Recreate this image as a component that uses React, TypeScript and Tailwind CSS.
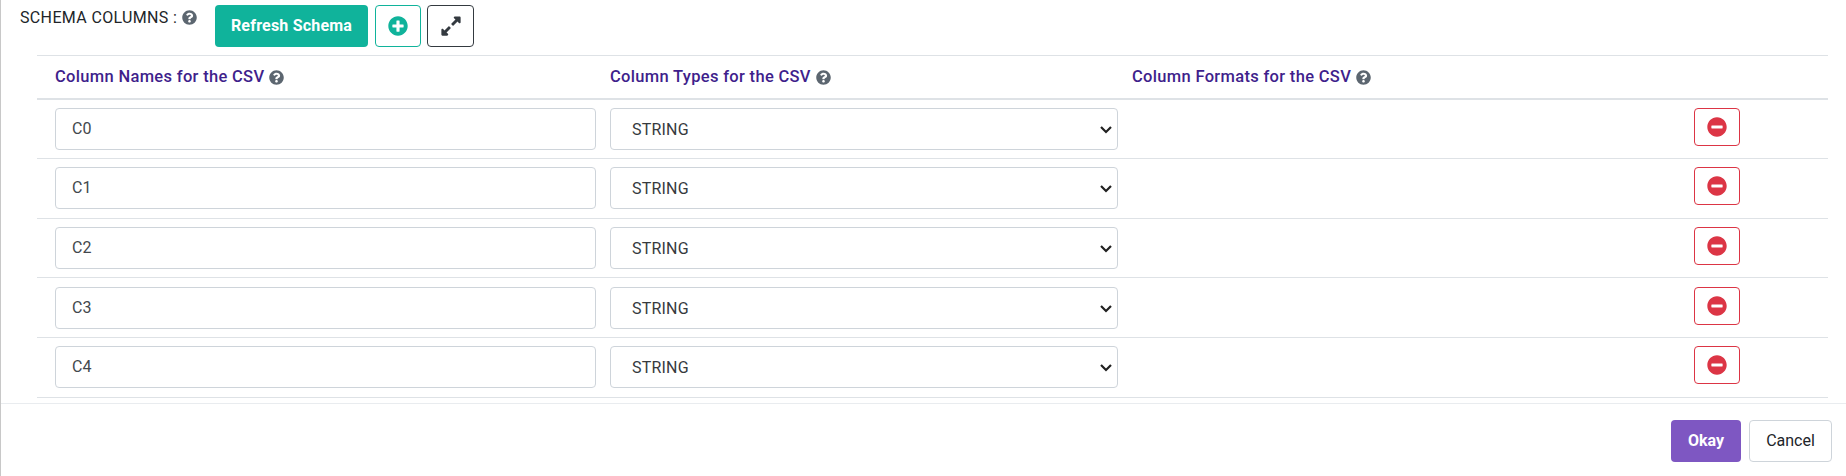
import { FaExpandAlt, FaMinusCircle, FaPlusCircle, FaQuestionCircle } from 'react-icons/fa';

const columns = [
  { name: 'C0', size: 'h-[59px] pt-2' },
  { name: 'C1', size: 'h-[60px] pt-2' },
  { name: 'C2', size: 'h-[59px] pt-2' },
  { name: 'C3', size: 'h-[60px] pt-[9px]' },
  { name: 'C4', size: 'h-[60px] pt-2' },
];
const grid = 'grid grid-cols-[555px_522px_562px_152px] ml-9 mr-[18px]';

function Heading({ children }: { children: string }) {
  return (
    <div className="flex items-center gap-[5px] text-[16.5px] font-medium tracking-[0.32px] text-[#3f1f8c]">
      <span>{children}</span>
      <FaQuestionCircle className="size-[15px] text-[#5c6670]" />
    </div>
  );
}

function Row({ name, size }: { name: string; size: string }) {
  return (
    <div className={`${grid} ${size} border-b border-[#dee2e6] pl-[18px]`}>
      <input
        defaultValue={name}
        className="h-[42px] w-[541px] rounded border border-[#ced4da] bg-white px-4 pb-px text-base text-[#43484d]"
      />
      <div className="relative h-[42px] w-[508px]">
        <select className="h-full w-full appearance-none rounded border border-[#ced4da] bg-white pl-[21px] pr-5 pt-px text-base tracking-[0.2px] text-[#363a3e]">
          <option>STRING</option>
        </select>
        <svg viewBox="0 0 12 8" className="pointer-events-none absolute right-[6px] top-[18px] h-2 w-3" fill="none" stroke="#212121" strokeWidth="2.2">
          <path d="M1 1l5 5 5-5" />
        </svg>
      </div>
      <div />
      <button className="flex h-[38px] w-[46px] items-center justify-center rounded border border-[#dc3545] pb-px text-[#dc3545]">
        <FaMinusCircle className="size-5" />
      </button>
    </div>
  );
}

export default function App() {
  return (
    <div className="h-[476px] overflow-hidden border-l border-[#c8c8c8] bg-white font-[Roboto,sans-serif] text-[#212529]">
      <div className="flex h-[55px] pl-[19px] pt-[5px]">
        <div className="flex h-[25px] w-[195px] items-center gap-[5px] whitespace-nowrap text-base tracking-[0.35px]">
          <span>SCHEMA COLUMNS :</span>
          <FaQuestionCircle className="size-[15px] text-[#5c6670]" />
        </div>
        <button className="h-[42px] w-[153px] rounded bg-[#10b39b] pb-px text-base font-bold tracking-[0.2px] text-white">Refresh Schema</button>
        <button className="ml-[7px] flex h-[42px] w-[46px] items-center justify-center rounded border border-[#10b39b] text-[#10b39b]">
          <FaPlusCircle className="size-5" />
        </button>
        <button className="ml-[6px] flex h-[42px] w-[47px] items-center justify-center rounded border border-[#343a40] text-[#343a40]">
          <FaExpandAlt className="size-[22px]" />
        </button>
      </div>
      <div className={`${grid} h-[45px] border-b-2 border-t border-[#dee2e6] pl-[18px]`}>
        <Heading>Column Names for the CSV</Heading>
        <Heading>Column Types for the CSV</Heading>
        <Heading>Column Formats for the CSV</Heading>
      </div>
      {columns.map(({ name, size }) => (
        <Row key={name} name={name} size={size} />
      ))}
      <div className="mt-[5px] flex justify-end gap-2 border-t border-[#e9ecef] pr-[14px] pt-4">
        <button className="h-[42px] w-[70px] rounded bg-[#7e57c2] text-base font-bold text-white">Okay</button>
        <button className="h-[42px] w-[83px] rounded border border-[#ced4da] text-base text-[#212529]">Cancel</button>
      </div>
    </div>
  );
}
